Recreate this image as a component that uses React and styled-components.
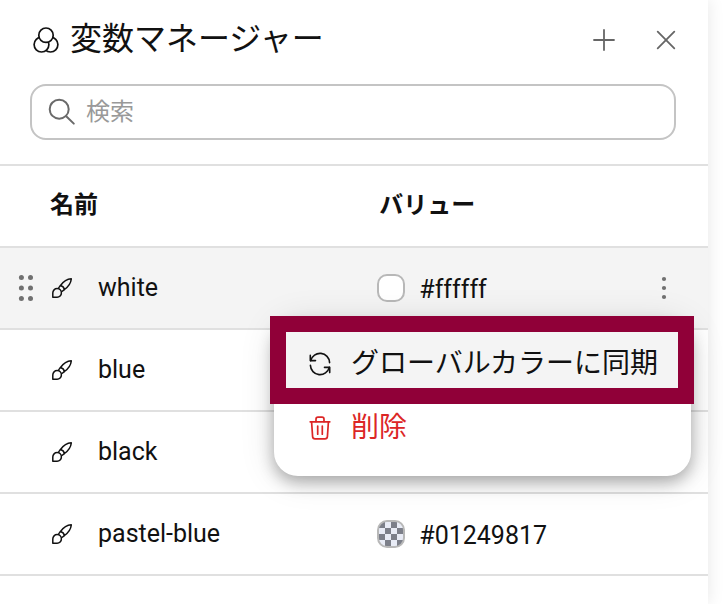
import React, { useState } from "react";
import styled, { createGlobalStyle } from "styled-components";

const VARIABLES = [
  { name: "white", color: "#ffffff", value: "#ffffff" },
  { name: "blue", color: "#0000ff" },
  { name: "black", color: "#000000" },
  { name: "pastel-blue", color: "#01249817", value: "#01249817" },
];

const CirclesIcon = () => (
  <svg width="28" height="28" viewBox="0 0 28 28" aria-hidden="true">
    <g fill="#fff" stroke="#111" strokeWidth="1.7">
      <circle cx="18.5" cy="18.6" r="7.4" />
      <circle cx="9.5" cy="18.6" r="7.4" />
      <circle cx="14" cy="9.2" r="7.2" />
    </g>
  </svg>
);

const PlusIcon = () => (
  <svg width="22" height="22" viewBox="0 0 22 22" aria-hidden="true">
    <path d="M11 1v20M1 11h20" stroke="#666" strokeWidth="1.8" strokeLinecap="round" />
  </svg>
);

const CloseIcon = () => (
  <svg width="22" height="22" viewBox="0 0 22 22" aria-hidden="true">
    <path d="M2.7 2.7l16.6 16.6M19.3 2.7L2.7 19.3" stroke="#666" strokeWidth="1.8" strokeLinecap="round" />
  </svg>
);

const SearchIcon = () => (
  <svg width="28" height="28" viewBox="0 0 28 28" aria-hidden="true">
    <g fill="none" stroke="#6a6a6a" strokeWidth="2" strokeLinecap="round">
      <circle cx="11.2" cy="11.2" r="9.5" />
      <path d="M18.2 18.2l7.6 7.4" />
    </g>
  </svg>
);

const BrushIcon = () => (
  <svg width="20" height="20" viewBox="0 0 20 20" aria-hidden="true">
    <g fill="none" stroke="#111" strokeWidth="1.5" strokeLinejoin="round">
      <path d="M8.5 7.5C11 4 15.5 1 19.3.8C19 4.5 16 9 12.5 11.5C12 9.5 10.5 8 8.5 7.5Z" />
      <path d="M8.5 7.5C7.2 8.8 6.6 9.7 6.4 10.7M12.5 11.5C11.3 12.7 10.4 13.4 9.3 13.7" />
      <path d="M.8 19.2v-4.3a4.3 4.3 0 1 1 4.3 4.3z" />
    </g>
  </svg>
);

const DragIcon = () => (
  <svg width="16" height="26" viewBox="0 0 16 26" aria-hidden="true">
    <g fill="#707070">
      {[2.6, 13, 23.4].map((y) => (
        <React.Fragment key={y}>
          <circle cx="3.4" cy={y} r="2.5" />
          <circle cx="12.5" cy={y} r="2.5" />
        </React.Fragment>
      ))}
    </g>
  </svg>
);

const KebabIcon = () => (
  <svg width="6" height="24" viewBox="0 0 6 24" aria-hidden="true">
    <g fill="#707070">
      <circle cx="3" cy="3" r="2.1" />
      <circle cx="3" cy="12" r="2.1" />
      <circle cx="3" cy="21" r="2.1" />
    </g>
  </svg>
);

const SyncIcon = () => (
  <svg width="22" height="24" viewBox="0 0 22 24" aria-hidden="true">
    <g fill="none" stroke="#111" strokeWidth="1.6" strokeLinecap="round" strokeLinejoin="round">
      <path d="M1.3 3.4v5.2h5.2" />
      <path d="M1.7 8.6A9.6 9.6 0 0 1 20.6 10.6" />
      <path d="M20.7 20.6v-5.2h-5.2" />
      <path d="M20.3 15.4A9.6 9.6 0 0 1 1.4 13.4" />
    </g>
  </svg>
);

const TrashIcon = () => (
  <svg width="22" height="24" viewBox="0 0 22 24" aria-hidden="true">
    <g fill="none" stroke="#dc2626" strokeWidth="1.7" strokeLinecap="round" strokeLinejoin="round">
      <path d="M1.2 5.8h19.6" />
      <path d="M7 5.6V3.2q0-2 2-2h4q2 0 2 2v2.4" />
      <path d="M2.6 6l1 14.6q.2 2.2 2.4 2.2h10q2.2 0 2.4-2.2l1-14.6" />
      <path d="M8.7 10v8.2M13.3 10v8.2" />
    </g>
  </svg>
);

const App = () => {
  const [search, setSearch] = useState("");
  const [openRow, setOpenRow] = useState("white");

  const toggleMenu = (name) => {
    setOpenRow(openRow === name ? null : name);
  };

  return (
    <React.Fragment>
      <GlobalStyle />
      <Panel>
        <Header>
          <CirclesIcon />
          <Title>変数マネージャー</Title>
          <IconButton aria-label="追加">
            <PlusIcon />
          </IconButton>
          <IconButton aria-label="閉じる">
            <CloseIcon />
          </IconButton>
        </Header>
        <SearchBox>
          <SearchIcon />
          <SearchInput
            aria-label="検索"
            placeholder="検索"
            value={search}
            onChange={(e) => setSearch(e.target.value)}
          />
        </SearchBox>
        <Table>
          <thead>
            <tr>
              <NameHeading scope="col">名前</NameHeading>
              <ValueHeading scope="col">バリュー</ValueHeading>
            </tr>
          </thead>
          <tbody>
            {VARIABLES.filter((item) => item.name.includes(search)).map((item) => (
              <Row key={item.name} $active={openRow === item.name}>
                <Cell>
                  <NameContent>
                    <DragSlot>{openRow === item.name && <DragIcon />}</DragSlot>
                    <BrushIcon />
                    <Name>{item.name}</Name>
                  </NameContent>
                </Cell>
                <Cell>
                  <ValueContent>
                    <Swatch $color={item.color} />
                    <Value>{item.value}</Value>
                    {openRow === item.name && (
                      <MoreButton aria-label="メニュー" onClick={() => toggleMenu(item.name)}>
                        <KebabIcon />
                      </MoreButton>
                    )}
                  </ValueContent>
                  {openRow === item.name && (
                    <Menu>
                      <MenuItem $highlighted>
                        <SyncIcon />
                        グローバルカラーに同期
                      </MenuItem>
                      <MenuItem $danger>
                        <TrashIcon />
                        削除
                      </MenuItem>
                    </Menu>
                  )}
                </Cell>
              </Row>
            ))}
          </tbody>
        </Table>
      </Panel>
    </React.Fragment>
  );
};

const GlobalStyle = createGlobalStyle`
  * {
    box-sizing: border-box;
  }
  body {
    margin: 0;
    padding-right: 16px;
    background: #fff;
    color: #111;
    font-family: Roboto, "Noto Sans CJK JP", sans-serif;
    overflow-x: hidden;
  }
  button,
  input {
    font-family: inherit;
  }
  svg {
    display: block;
    flex: none;
  }
`;

const Panel = styled.main`
  min-height: 100vh;
  background: #fff;
  box-shadow: 0 0 16px rgba(0, 0, 0, 0.1);
`;

const Header = styled.header`
  display: flex;
  align-items: center;
  height: 80px;
  padding: 0 31px 0 32px;
`;

const Title = styled.h1`
  flex: 1;
  margin: 0 0 2px 10px;
  font-size: 32px;
  line-height: 40px;
  font-weight: 400;
`;

const IconButton = styled.button`
  margin-left: 40px;
  padding: 0;
  border: none;
  background: none;
  cursor: pointer;
`;

const SearchBox = styled.div`
  display: flex;
  align-items: center;
  height: 56px;
  margin: 4px 32px 24px 30px;
  padding: 0 16px;
  border: 2px solid #c4c4c4;
  border-radius: 16px;
`;

const SearchInput = styled.input`
  flex: 1;
  min-width: 0;
  margin-left: 10px;
  padding: 0;
  border: none;
  outline: none;
  background: none;
  color: #111;
  font-size: 24px;
  line-height: 32px;

  &::placeholder {
    color: #999;
    opacity: 1;
  }
`;

const Table = styled.table`
  width: 100%;
  table-layout: fixed;
  border-spacing: 0;
  border-top: 2px solid #e0e0e0;
`;

const Heading = styled.th`
  height: 82px;
  border-bottom: 2px solid #e0e0e0;
  font-size: 24px;
  line-height: 32px;
  font-weight: 700;
  text-align: left;
`;

const NameHeading = styled(Heading)`
  width: 53%;
  padding: 0 0 2px 50px;
`;

const ValueHeading = styled(Heading)`
  padding: 0 0 2px 4px;
`;

const Row = styled.tr`
  background: ${(props) => (props.$active ? "#f4f4f4" : "#fff")};
`;

const Cell = styled.td`
  position: relative;
  height: 82px;
  padding: 0;
  border-bottom: 2px solid #e0e0e0;
`;

const NameContent = styled.div`
  display: flex;
  align-items: center;
  padding-left: 18px;
`;

const DragSlot = styled.span`
  width: 34px;
  cursor: grab;
`;

const Name = styled.span`
  padding-left: 26px;
  font-size: 25px;
  line-height: 32px;
`;

const ValueContent = styled.div`
  display: flex;
  align-items: center;
  padding: 0 41px 0 2px;
`;

const Swatch = styled.span`
  width: 28px;
  height: 28px;
  border: 2px solid #b8b8b8;
  border-radius: 10px;
  background:
    linear-gradient(${(props) => props.$color}, ${(props) => props.$color}),
    repeating-conic-gradient(#fff 0 25%, #888 0 50%) 0 0 / 12px 12px;
`;

const Value = styled.span`
  flex: 1;
  margin-left: 14px;
  padding-top: 4px;
  font-size: 25px;
  line-height: 32px;
`;

const MoreButton = styled.button`
  padding: 0;
  border: none;
  background: none;
  cursor: pointer;
`;

const Menu = styled.div`
  position: absolute;
  top: 72px;
  right: 17px;
  z-index: 1;
  width: 417px;
  padding: 12px 0 16px;
  border-radius: 24px;
  background: #fff;
  box-shadow: 0 6px 16px rgba(0, 0, 0, 0.3), 0 2px 36px rgba(0, 0, 0, 0.12);
`;

const MenuItem = styled.button`
  position: relative;
  display: flex;
  align-items: center;
  gap: 20px;
  width: 100%;
  height: 64px;
  padding: 0 0 0 35px;
  border: none;
  background: none;
  color: ${(props) => (props.$danger ? "#dc2626" : "#111")};
  font-size: 28px;
  line-height: 40px;
  white-space: nowrap;
  cursor: pointer;

  ${(props) =>
    props.$highlighted &&
    `
    background: #f4f4f4;

    &::after {
      content: "";
      position: absolute;
      inset: -16px -3px -8px -4px;
      border: 16px solid #900038;
    }
  `}
`;

export default App;
